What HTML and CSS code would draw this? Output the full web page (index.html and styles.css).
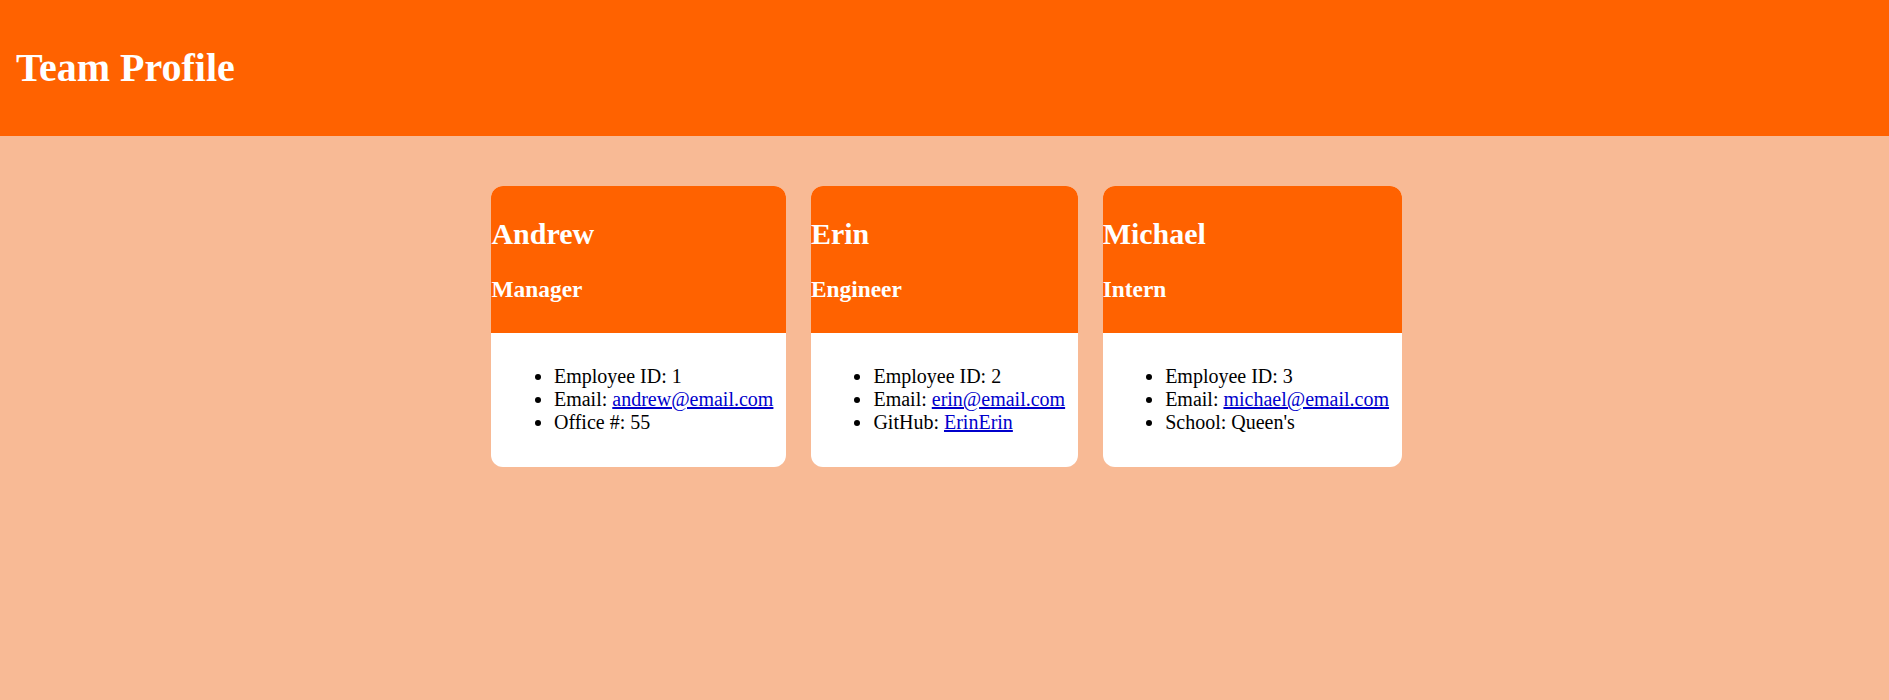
FILE: index.html
```html
<!DOCTYPE html>
<html lang="en">
<head>
<meta charset="UTF-8">
<title>Team Profile</title>
<link rel="stylesheet" href="styles.css">
</head>
<body>
<header class="top-bar">
  <h1 class="title">Team Profile</h1>
</header>
<main class="team">
  <section class="card">
    <div class="card-head">
      <h2 class="name">Andrew</h2>
      <h3 class="role">Manager</h3>
    </div>
    <div class="card-body">
      <ul class="details">
        <li>Employee ID: 1</li>
        <li>Email: <a href="mailto:andrew@email.com">andrew@email.com</a></li>
        <li>Office #: 55</li>
      </ul>
    </div>
  </section>
  <section class="card">
    <div class="card-head">
      <h2 class="name">Erin</h2>
      <h3 class="role">Engineer</h3>
    </div>
    <div class="card-body">
      <ul class="details">
        <li>Employee ID: 2</li>
        <li>Email: <a href="mailto:erin@email.com">erin@email.com</a></li>
        <li>GitHub: <a href="#">ErinErin</a></li>
      </ul>
    </div>
  </section>
  <section class="card">
    <div class="card-head">
      <h2 class="name">Michael</h2>
      <h3 class="role">Intern</h3>
    </div>
    <div class="card-body">
      <ul class="details">
        <li>Employee ID: 3</li>
        <li>Email: <a href="mailto:michael@email.com">michael@email.com</a></li>
        <li>School: Queen's</li>
      </ul>
    </div>
  </section>
</main>
</body>
</html>
```
FILE: styles.css
```css
html, body {
  margin: 0;
  padding: 0;
}
body {
  background: #f8ba95;
  font-family: "Liberation Serif", "Times New Roman", serif;
  font-size: 20px;
  color: #000;
  min-height: 700px;
}
.top-bar {
  background: #ff6200;
  height: 136px;
  box-sizing: border-box;
  padding: 0 16px;
  display: flex;
  align-items: center;
}
.title {
  margin: 0;
  color: #fff;
  font-size: 40px;
  font-weight: bold;
  line-height: 46px;
  position: relative;
  top: -0.5px;
}
.team {
  display: flex;
  justify-content: center;
  align-items: flex-start;
  gap: 25px;
  padding: 50px 0 0 4px;
}
.card {
  background: #fff;
  border-radius: 12px;
  overflow: hidden;
}
.card-head {
  background: #ff6200;
  color: #fff;
  padding: 5.5px 0 5.5px;
}
.name {
  margin: 25px 0;
  font-size: 30px;
  line-height: 34.5px;
  font-weight: bold;
}
.role {
  margin: 25px 0 24px;
  font-size: 23.4px;
  line-height: 27px;
  font-weight: bold;
}
.card-body {
  padding: 12.5px;
}
.details {
  margin: 20px 0;
  padding-left: 50px;
  line-height: 23px;
}
.details a {
  color: #0000cc;
}
```
